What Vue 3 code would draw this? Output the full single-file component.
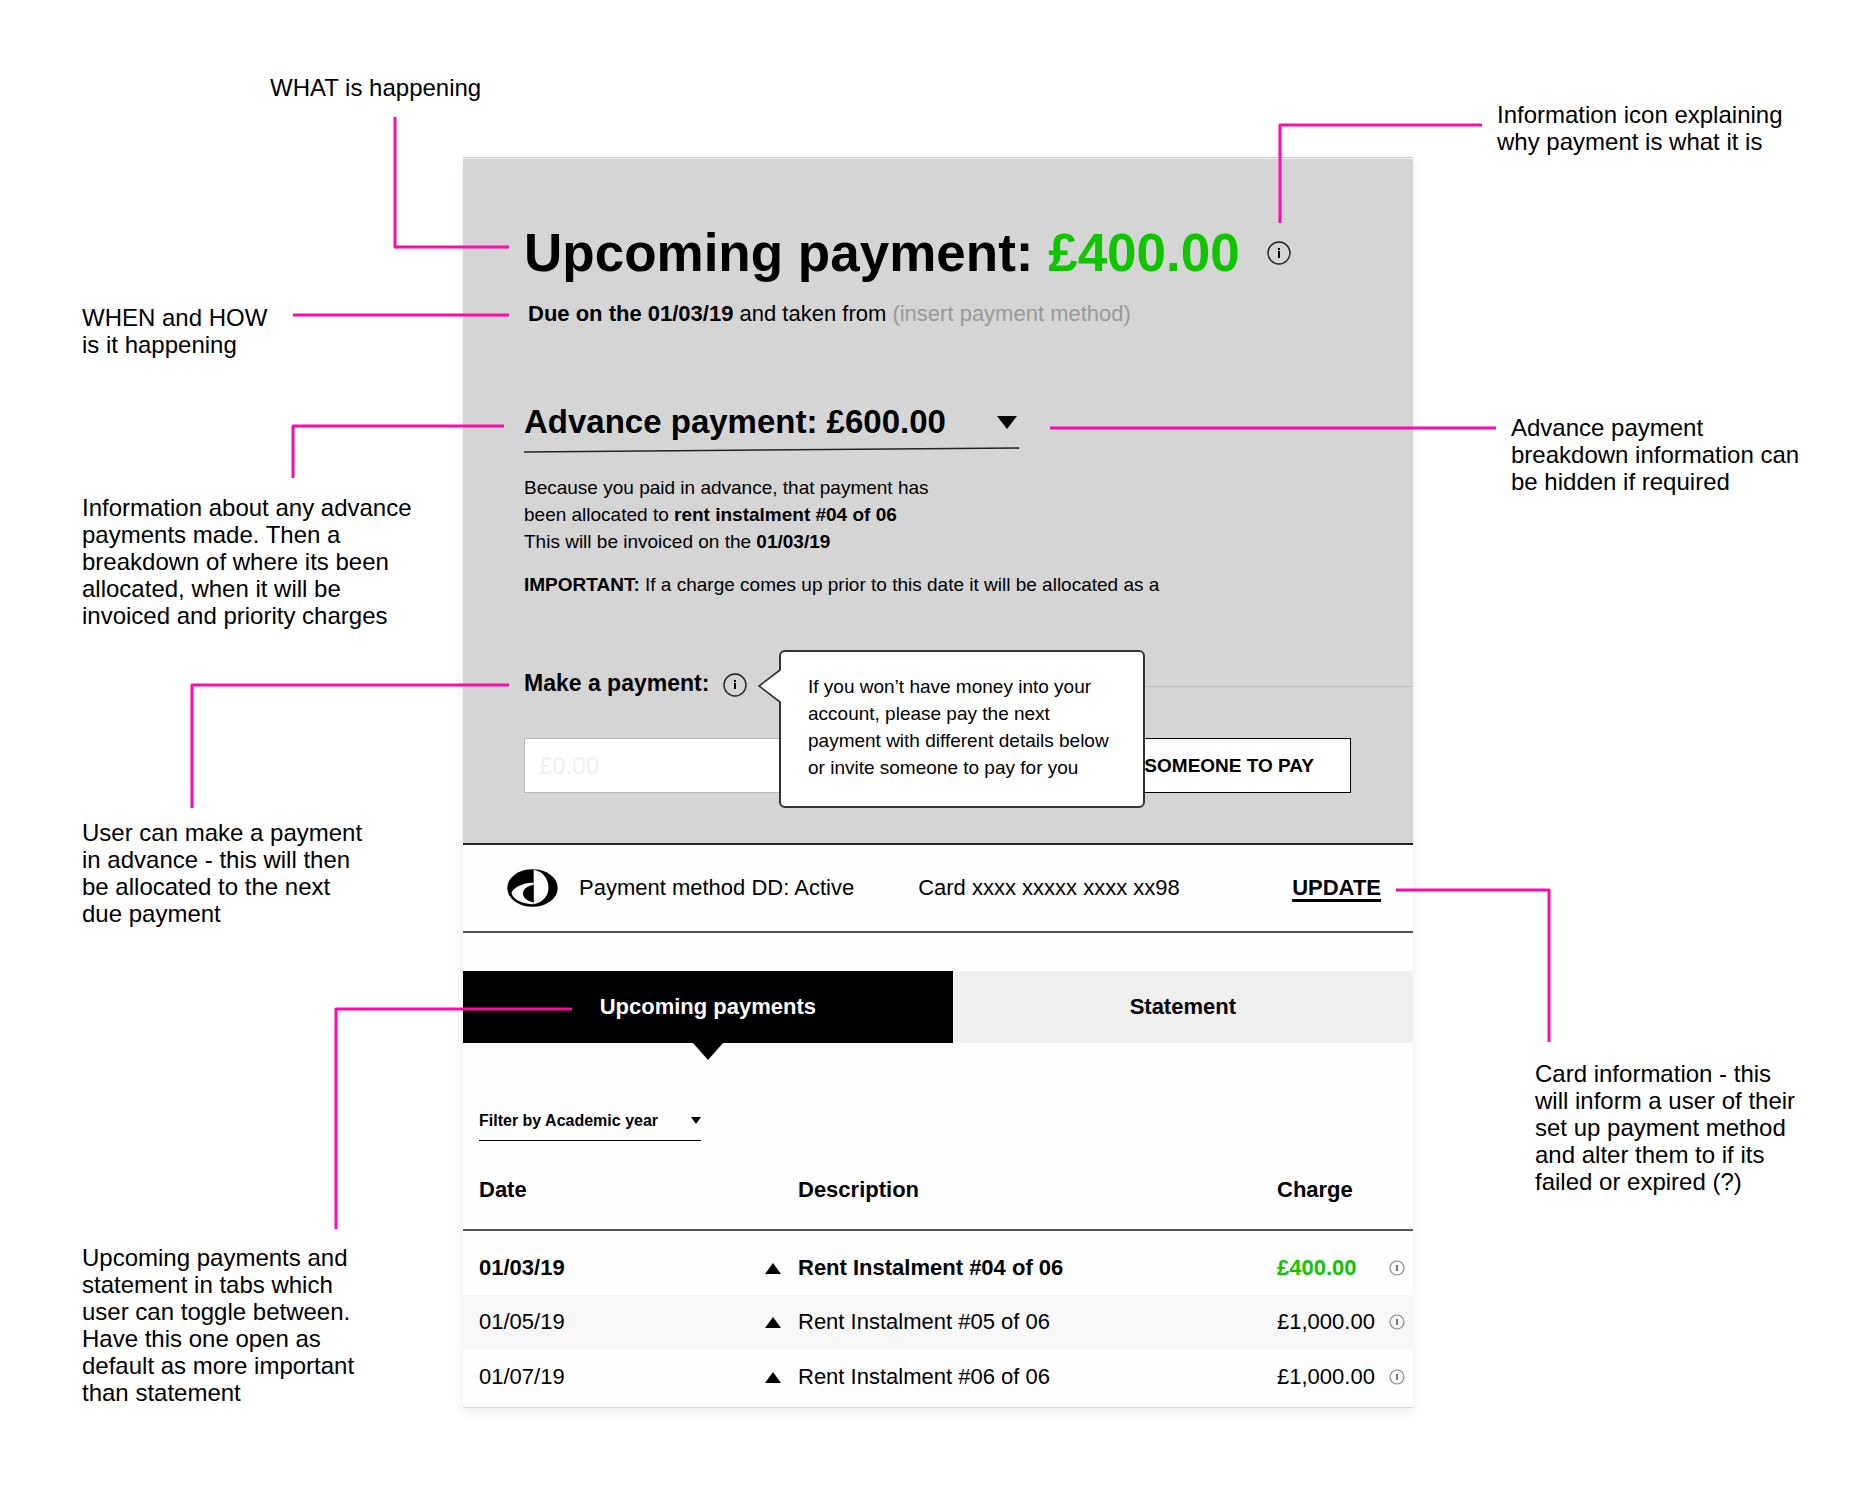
<template>
  <main class="page">
    <div class="board">
      <section class="card">
        <div class="summary">
          <div class="title-row">
            <h1 class="title">Upcoming payment: <span class="amount">£400.00</span></h1>
            <button class="icon-button" aria-label="Payment information">
              <svg class="info" viewBox="0 0 24 24">
                <circle cx="12" cy="12" r="11" />
                <path d="M11 7h2v2h-2zM11 10h2v7h-2z" />
              </svg>
            </button>
          </div>
          <p class="due">
            <b>Due on the 01/03/19</b> and taken from
            <span class="muted">(insert payment method)</span>
          </p>

          <div class="advance">
            <button class="advance-toggle" :aria-expanded="advanceOpen" @click="advanceOpen = !advanceOpen">
              <span>Advance payment: £600.00</span>
              <svg class="caret-big" viewBox="0 0 20 13"><path d="M0 0h20L10 13z" /></svg>
            </button>
            <svg class="slant" viewBox="0 0 496 6" preserveAspectRatio="none">
              <path d="M0 5L496 1" />
            </svg>
          </div>
          <div v-show="advanceOpen" class="breakdown">
            <p>
              Because you paid in advance, that payment has<br />
              been allocated to <b>rent instalment #04 of 06</b><br />
              This will be invoiced on the <b>01/03/19</b>
            </p>
            <p><b>IMPORTANT:</b> If a charge comes up prior to this date it will be allocated as a</p>
          </div>

          <div class="make">
            <label for="amount" class="make-label">Make a payment:</label>
            <button class="icon-button" aria-label="Help" @click="tipOpen = !tipOpen">
              <svg class="info" viewBox="0 0 24 24">
                <circle cx="12" cy="12" r="11" />
                <path d="M11 7h2v2h-2zM11 10h2v6h-2z" />
              </svg>
            </button>
            <span class="rule"></span>
            <div v-show="tipOpen" class="tooltip">
              <svg class="tip-arrow" viewBox="0 0 24 34">
                <path class="tip-fill" d="M24 1L2 17L24 33z" />
                <path class="tip-line" d="M23 1L2 17L23 33" />
              </svg>
              If you won’t have money into your account, please pay the next payment with different
              details below or invite someone to pay for you
            </div>
          </div>
          <div class="pay">
            <input id="amount" v-model="amount" class="pay-input" type="text" placeholder="£0.00" />
            <button class="pay-button">SOMEONE TO PAY</button>
          </div>
        </div>

        <div class="method">
          <svg class="logo" viewBox="0 0 151 113">
            <ellipse cx="75.5" cy="56.5" rx="75" ry="56" />
            <path
              class="logo-white"
              d="M79 2C108 7 123 30 123 55C123 80 108 99 79 105zM80 40C50 41 22 52 13 70C14 88 44 105 80 105z"
            />
            <path d="M79 47C58 51 46 62 47 74C50 88 62 96 79 99z" />
          </svg>
          <span class="method-name">Payment method DD: Active</span>
          <span>Card xxxx xxxxx xxxx xx98</span>
          <a href="#" class="update">UPDATE</a>
        </div>

        <div class="tabs" role="tablist">
          <button
            v-for="tab in tabs"
            :key="tab"
            class="tab"
            :class="{ active: tab === activeTab }"
            role="tab"
            :aria-selected="tab === activeTab"
            @click="activeTab = tab"
          >
            {{ tab }}
          </button>
        </div>

        <div class="filter">
          <select v-model="year" class="filter-select" aria-label="Filter by Academic year">
            <option value="">Filter by Academic year</option>
          </select>
          <svg class="caret-small" viewBox="0 0 10 7"><path d="M0 0h10L5 7z" /></svg>
        </div>

        <table class="payments">
          <thead>
            <tr>
              <th class="col-date">Date</th>
              <th class="col-toggle"></th>
              <th>Description</th>
              <th class="col-charge">Charge</th>
              <th class="col-info"></th>
            </tr>
          </thead>
          <tbody>
            <tr v-for="row in payments" :key="row.date" :class="{ next: row.next }">
              <td class="col-date">{{ row.date }}</td>
              <td>
                <button class="icon-button" :aria-label="row.description">
                  <svg class="caret-up" viewBox="0 0 16 11"><path d="M0 11h16L8 0z" /></svg>
                </button>
              </td>
              <td>{{ row.description }}</td>
              <td class="charge">{{ row.charge }}</td>
              <td>
                <button class="icon-button" aria-label="Charge information">
                  <svg class="info info-small" viewBox="0 0 16 16">
                    <circle cx="8" cy="8" r="7" />
                    <path d="M7 5h2v6h-2z" />
                  </svg>
                </button>
              </td>
            </tr>
          </tbody>
        </table>
      </section>

      <!-- connector lines, measured from the top left corner of the card -->
      <svg class="lines" width="950" height="1251">
        <path v-for="note in notes" :key="note.line" :d="note.line" />
      </svg>
      <p
        v-for="note in notes"
        :key="note.text"
        class="note"
        :style="{ '--x': note.x + 'px', '--y': note.y + 'px' }"
      >
        {{ note.text }}
      </p>
    </div>
  </main>
</template>

<script setup>
import { ref } from 'vue'

const advanceOpen = ref(true)
const tipOpen = ref(true)
const amount = ref('')
const year = ref('')

const tabs = ['Upcoming payments', 'Statement']
const activeTab = ref(tabs[0])

const payments = [
  { date: '01/03/19', description: 'Rent Instalment #04 of 06', charge: '£400.00', next: true },
  { date: '01/05/19', description: 'Rent Instalment #05 of 06', charge: '£1,000.00' },
  { date: '01/07/19', description: 'Rent Instalment #06 of 06', charge: '£1,000.00' }
]

const notes = [
  { x: -193, y: -83, line: 'M-68 -40V90H46', text: 'WHAT is happening' },
  { x: -381, y: 147, line: 'M-170 158H46', text: 'WHEN and HOW\nis it happening' },
  {
    x: -381,
    y: 337,
    line: 'M-170 321V269H41',
    text: 'Information about any advance\npayments made. Then a\nbreakdown of where its been\nallocated, when it will be\ninvoiced and priority charges'
  },
  {
    x: -381,
    y: 662,
    line: 'M-271 651V528H46',
    text: 'User can make a payment\nin advance - this will then\nbe allocated to the next\ndue payment'
  },
  {
    x: -381,
    y: 1087,
    line: 'M-127 1072V852H109',
    text: 'Upcoming payments and\nstatement in tabs which\nuser can toggle between.\nHave this one open as\ndefault as more important\nthan statement'
  },
  {
    x: 1034,
    y: -56,
    line: 'M817 66V-32H1019',
    text: 'Information icon explaining\nwhy payment is what it is'
  },
  {
    x: 1048,
    y: 257,
    line: 'M587 271H1033',
    text: 'Advance payment\nbreakdown information can\nbe hidden if required'
  },
  {
    x: 1072,
    y: 903,
    line: 'M933 733H1086V885',
    text: 'Card information - this\nwill inform a user of their\nset up payment method\nand alter them to if its\nfailed or expired (?)'
  }
]
</script>

<style>
body {
  margin: 0;
  background: #fff;
}
</style>

<style scoped>
.page {
  padding: 157px 24px 86px;
  overflow: hidden;
  font-family: 'Liberation Sans', Arial, sans-serif;
  font-size: 22px;
  color: #000;
}

.board {
  position: relative;
  max-width: 950px;
  margin: 0 auto;
}

.card {
  background: #fefefe;
  border-top: 1px solid #c8c8c8;
  border-bottom: 1px solid #dcdcdc;
  box-shadow: 0 4px 10px rgba(0, 0, 0, 0.08);
}

button,
select,
input {
  font-family: inherit;
  color: inherit;
  border-radius: 0;
}

h1,
p {
  margin: 0;
}

.icon-button {
  display: block;
  padding: 0;
  border: 0;
  background: none;
  cursor: pointer;
}

.info {
  display: block;
  width: 24px;
  height: 24px;
}

.info circle {
  fill: none;
  stroke: #222;
  stroke-width: 1.4;
}

.info-small {
  width: 16px;
  height: 16px;
}

.info-small circle {
  stroke: #888;
  stroke-width: 1.2;
}

.info-small path {
  fill: #777;
}

.summary {
  padding: 64px 62px 50px 61px;
  border-top: 1px solid #f4f4f4;
  background: #d5d5d5;
}

.title-row {
  display: flex;
  align-items: center;
  gap: 27px;
}

.title {
  font-size: 53px;
  line-height: 60px;
}

.amount,
.next .charge {
  color: #10c400;
}

.due {
  margin-top: 18px;
  padding-left: 4px;
  line-height: 26px;
}

.muted {
  color: #999;
}

.advance {
  max-width: 495px;
  margin-top: 76px;
}

.advance-toggle {
  display: flex;
  align-items: center;
  justify-content: space-between;
  width: 100%;
  padding: 0 2px 0 0;
  border: 0;
  background: none;
  font-size: 33px;
  font-weight: bold;
  line-height: 38px;
  text-align: left;
  cursor: pointer;
}

.caret-big {
  width: 20px;
  height: 13px;
}

.slant {
  display: block;
  width: 100%;
  height: 6px;
  margin-top: 6px;
}

.slant path {
  fill: none;
  stroke: #222;
  stroke-width: 1.5;
}

.breakdown {
  display: flex;
  flex-direction: column;
  gap: 16px;
  margin-top: 21px;
  font-size: 19px;
  line-height: 27px;
}

.make {
  position: relative;
  display: flex;
  align-items: flex-end;
  gap: 14px;
  margin-top: 71px;
  margin-right: -62px;
}

.make-label {
  font-size: 23px;
  font-weight: bold;
  line-height: 28px;
}

.rule {
  flex: 1;
  margin: 0 0 10px 40px;
  border-top: 1px solid #bdbdbd;
}

.tooltip {
  position: absolute;
  top: -19px;
  left: 255px;
  box-sizing: border-box;
  width: 366px;
  padding: 21px 27px 25px;
  border: 2px solid #333;
  border-radius: 6px;
  background: #fff;
  font-size: 19px;
  line-height: 27px;
}

.tip-arrow {
  position: absolute;
  top: 17px;
  left: -24px;
  width: 24px;
  height: 34px;
}

.tip-fill {
  fill: #fff;
}

.tip-line {
  fill: none;
  stroke: #333;
  stroke-width: 1.6;
}

.pay {
  display: flex;
  gap: 16px;
  margin-top: 41px;
}

.pay-input {
  flex: 1;
  box-sizing: border-box;
  min-width: 0;
  height: 55px;
  padding: 0 14px;
  border: 1px solid #bbb;
  background: #fff;
  font-size: 24px;
}

.pay-input::placeholder {
  color: #efefef;
  opacity: 1;
}

.pay-button {
  width: 260px;
  padding: 0 36px 0 0;
  border: 1px solid #000;
  background: #fff;
  font-size: 19px;
  font-weight: bold;
  text-align: right;
  cursor: pointer;
}

.method {
  display: flex;
  align-items: center;
  height: 86px;
  padding: 0 32px 0 44px;
  border-top: 2px solid #222;
  border-bottom: 2px solid #555;
}

.logo {
  width: 51px;
  height: 38px;
}

.logo-white {
  fill: #fff;
}

.method-name {
  margin: 0 64px 0 21px;
}

.update {
  margin-left: auto;
  color: #000;
  font-weight: bold;
  text-decoration: underline;
  text-decoration-thickness: 3px;
  text-underline-offset: 4px;
}

.tabs {
  display: flex;
  margin-top: 38px;
}

.tab {
  position: relative;
  flex: 46;
  height: 72px;
  border: 0;
  background: #efefef;
  font-size: 22px;
  font-weight: bold;
  cursor: pointer;
}

.tab:first-child {
  flex: 49;
}

.tab.active {
  background: #000;
  color: #fff;
}

.tab.active::after {
  content: '';
  position: absolute;
  top: 100%;
  left: 50%;
  margin-left: -15px;
  border: 15px solid transparent;
  border-top: 17px solid #000;
  border-bottom: 0;
}

.filter {
  display: flex;
  align-items: center;
  width: 222px;
  margin: 67px 0 0 16px;
  padding-bottom: 10px;
  border-bottom: 1px solid #000;
}

.filter-select {
  flex: 1;
  height: 20px;
  padding: 0;
  border: 0;
  appearance: none;
  background: none;
  font-size: 16px;
  font-weight: bold;
}

.caret-small {
  width: 10px;
  height: 7px;
}

.payments {
  width: 100%;
  margin-top: 10px;
  border-collapse: separate;
  border-spacing: 0;
  table-layout: fixed;
}

.payments th,
.payments td {
  height: 54px;
  padding: 0;
  text-align: left;
}

.payments th {
  height: 78px;
  border-bottom: 2px solid #555;
}

.payments .next td {
  padding-top: 10px;
  font-weight: bold;
}

.payments tr:nth-child(even) {
  background: #f7f7f7;
}

.payments tbody tr:last-child td {
  padding-top: 1px;
  padding-bottom: 3px;
}

.payments .col-date {
  width: 286px;
  padding-left: 16px;
}

.col-toggle {
  width: 33px;
}

.col-charge {
  width: 112px;
}

.col-info {
  width: 24px;
}

.caret-up {
  display: block;
  width: 16px;
  height: 11px;
}

.lines {
  position: absolute;
  top: 0;
  left: 0;
  overflow: visible;
  pointer-events: none;
}

.lines path {
  fill: none;
  stroke: #ff0aa9;
  stroke-width: 3;
  stroke-linejoin: round;
}

.note {
  position: absolute;
  top: var(--y);
  left: var(--x);
  font-size: 24px;
  line-height: 27px;
  white-space: pre;
}

/* without room beside the card the notes become a list under it */
@media (max-width: 1700px) {
  .lines {
    display: none;
  }

  .note {
    position: static;
    margin-top: 27px;
    white-space: normal;
  }
}
</style>
